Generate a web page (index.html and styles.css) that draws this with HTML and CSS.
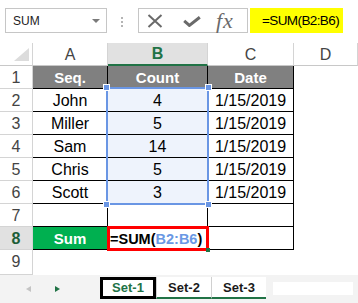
FILE: index.html
```html
<!DOCTYPE html>
<html lang="en">
<head>
  <meta charset="UTF-8">
  <meta name="viewport" content="width=device-width, initial-scale=1.0">
  <title>SUM in Excel</title>
  <link rel="stylesheet" href="styles.css">
</head>
<body>
  <div id="app">
    <div class="formulaBar">
      <div class="nameBox"><span>SUM</span><i class="caret"></i></div>
      <div class="grip"><i></i><i></i><i></i></div>
      <div class="fxBox">
        <svg class="icoCancel" width="16" height="14" viewBox="0 0 16 14"><path d="M1.5 1 L14.5 13 M14.5 1 L1.5 13" stroke="#6a6a6a" stroke-width="2" fill="none"/></svg>
        <svg class="icoEnter" width="18" height="11" viewBox="0 0 18 11"><path d="M1.2 4.8 L6.4 9.4 L16.8 1.2" stroke="#6a6a6a" stroke-width="3" fill="none"/></svg>
        <span class="fx">fx</span>
      </div>
      <div class="formulaInput">=SUM(B2:B6)</div>
    </div>

    <div class="sheet">
      <div class="corner"></div>
      <div class="colHead">A</div>
      <div class="colHead active">B</div>
      <div class="colHead">C</div>
      <div class="colHead">D</div>

      <div class="rowHead">1</div>
      <div class="cell head">Seq.</div>
      <div class="cell head">Count</div>
      <div class="cell head">Date</div>
      <div class="blank"></div>

      <div class="rowHead">2</div>
      <div class="cell">John</div>
      <div class="cell picked">4</div>
      <div class="cell">1/15/2019</div>
      <div class="blank"></div>

      <div class="rowHead">3</div>
      <div class="cell">Miller</div>
      <div class="cell picked">5</div>
      <div class="cell">1/15/2019</div>
      <div class="blank"></div>

      <div class="rowHead">4</div>
      <div class="cell">Sam</div>
      <div class="cell picked">14</div>
      <div class="cell">1/15/2019</div>
      <div class="blank"></div>

      <div class="rowHead">5</div>
      <div class="cell">Chris</div>
      <div class="cell picked">5</div>
      <div class="cell">1/15/2019</div>
      <div class="blank"></div>

      <div class="rowHead">6</div>
      <div class="cell">Scott</div>
      <div class="cell picked">3</div>
      <div class="cell">1/15/2019</div>
      <div class="blank"></div>

      <div class="rowHead">7</div>
      <div class="cell"></div>
      <div class="cell"></div>
      <div class="cell"></div>
      <div class="blank"></div>

      <div class="rowHead active">8</div>
      <div class="cell sum">Sum</div>
      <div class="cell editing">=SUM(<span class="ref">B2:B6</span>)</div>
      <div class="cell"></div>
      <div class="blank"></div>

      <div class="rowHead">9</div>
      <div class="blank"></div>
      <div class="blank"></div>
      <div class="blank"></div>
      <div class="blank"></div>

      <div class="selection">
        <i class="handle tl"></i><i class="handle tr"></i>
        <i class="handle bl"></i><i class="handle br"></i>
      </div>
    </div>

    <div class="tabBar">
      <div class="tabNav"><i class="arrowLeft"></i><i class="arrowRight"></i></div>
      <div class="tab current">Set-1</div>
      <div class="tab">Set-2</div>
      <div class="tab">Set-3</div>
      <div class="scrollBox"></div>
    </div>
  </div>
</body>
</html>
```

FILE: styles.css
```css
body {
  margin: 0;
  padding: 0;
  background-color: #ffffff;
  font-family: "Liberation Sans", Arial, sans-serif;
  color: #000000;
}
#app {
  width: 358px;
  height: 303px;
  overflow: hidden;
}

/* formula bar */
.formulaBar {
  display: flex;
  align-items: flex-start;
  height: 43px;
  padding: 8px 0 0 5px;
  box-sizing: border-box;
}
.nameBox {
  width: 102px;
  height: 25px;
  box-sizing: border-box;
  border: 1px solid #c6c6c6;
  display: flex;
  align-items: center;
  justify-content: space-between;
  padding: 0 6px 0 7px;
  font-size: 12px;
  color: #222222;
}
.caret {
  width: 0;
  height: 0;
  border-left: 4px solid transparent;
  border-right: 4px solid transparent;
  border-top: 4px solid #7a7a7a;
  margin-top: 1px;
}
.grip {
  display: flex;
  flex-direction: column;
  gap: 2px;
  margin: 9px 15px 0 14px;
}
.grip i {
  width: 2px;
  height: 2px;
  background-color: #b4b4b4;
}
.fxBox {
  width: 110px;
  height: 25px;
  box-sizing: border-box;
  border: 1px solid #c6c6c6;
  display: flex;
  align-items: center;
  padding-left: 8px;
}
.icoEnter {
  margin-left: 20px;
  margin-top: 2px;
}
.fx {
  margin-left: 15px;
  font-family: "Liberation Serif", "Times New Roman", serif;
  font-style: italic;
  font-size: 22px;
  letter-spacing: 1px;
  color: #6a6a6a;
  line-height: 22px;
}
.formulaInput {
  width: 93px;
  height: 25px;
  margin-left: 2px;
  background-color: #ffff00;
  font-size: 13.5px;
  letter-spacing: -0.6px;
  line-height: 26px;
  padding-left: 12px;
  box-sizing: border-box;
  white-space: nowrap;
}

/* grid */
.sheet {
  position: relative;
  display: grid;
  grid-template-columns: 33px 75px 100px 86px 64px;
  grid-template-rows: repeat(9, 23px) 25px;
}
.corner {
  position: relative;
  border-right: 1px solid #d4d4d4;
  border-bottom: 1px solid #c8c8c8;
}
.corner::after {
  content: "";
  position: absolute;
  right: 3px;
  bottom: 4px;
  width: 15px;
  height: 13px;
  background-color: #dcdcdc;
  clip-path: polygon(100% 0, 100% 100%, 0 100%);
}
.colHead {
  border-right: 1px solid #d4d4d4;
  border-bottom: 1px solid #c8c8c8;
  text-align: center;
  font-size: 16px;
  line-height: 23px;
  color: #444444;
}
.colHead.active {
  background-color: #e1e1e1;
  border-bottom: 2px solid #217346;
  color: #217346;
  font-weight: bold;
  line-height: 22px;
}
.rowHead {
  border-right: 1px solid #d4d4d4;
  border-bottom: 1px solid #d4d4d4;
  text-align: center;
  font-size: 16px;
  line-height: 23px;
  color: #444444;
}
.rowHead.active {
  background-color: #e1e1e1;
  color: #1d5e38;
  font-weight: bold;
}
.cell {
  border-right: 1px solid #000000;
  border-bottom: 1px solid #000000;
  text-align: center;
  font-size: 16px;
  line-height: 23px;
  white-space: nowrap;
}
.cell.head {
  background-color: #808080;
  color: #ffffff;
  font-weight: bold;
  font-size: 15px;
  line-height: 24px;
}
.cell.picked {
  background-color: #eef3fc;
}
.cell.sum {
  background-color: #00b050;
  color: #ffffff;
  font-weight: bold;
  font-size: 15px;
  line-height: 24px;
}
.cell.editing {
  position: relative;
  z-index: 1;
  text-align: left;
  padding-left: 2px;
  font-weight: bold;
  font-size: 14.5px;
  line-height: 24px;
  outline: 3px solid #ff0000;
  outline-offset: -2px;
}
.cell.editing::after {
  content: "";
  position: absolute;
  right: -3px;
  bottom: -3px;
  width: 4px;
  height: 4px;
  background-color: #217346;
}
.ref {
  color: #6a98e4;
}

/* range being referenced */
.selection {
  position: absolute;
  left: 106px;
  top: 44px;
  width: 103px;
  height: 118px;
  box-sizing: border-box;
  border: 2px solid #6a96e4;
  pointer-events: none;
}
.handle {
  position: absolute;
  width: 5px;
  height: 5px;
  background-color: #6a96e4;
  border: 1px solid #ffffff;
}
.handle.tl { left: -5px; top: -5px; }
.handle.tr { right: -5px; top: -5px; }
.handle.bl { left: -5px; bottom: -5px; }
.handle.br { right: -5px; bottom: -5px; }

/* sheet tabs */
.tabBar {
  display: flex;
  align-items: flex-start;
  height: 28px;
  background-color: #f3f3f3;
}
.tabNav {
  width: 100px;
  height: 28px;
  display: flex;
  align-items: center;
  padding-left: 26px;
  box-sizing: border-box;
}
.arrowLeft {
  width: 0;
  height: 0;
  border-top: 3px solid transparent;
  border-bottom: 3px solid transparent;
  border-right: 5px solid #c4c4c4;
}
.arrowRight {
  width: 0;
  height: 0;
  margin-left: 24px;
  border-top: 3px solid transparent;
  border-bottom: 3px solid transparent;
  border-left: 5px solid #217346;
}
.tab {
  width: 55px;
  height: 22px;
  margin-top: 2px;
  box-sizing: border-box;
  background-color: #ffffff;
  border-bottom: 2px solid #217346;
  font-size: 13px;
  font-weight: bold;
  line-height: 21px;
  text-align: center;
  color: #1a1a1a;
}
.tab + .tab {
  border-left: 1px solid #d0d0d0;
}
.tab.current {
  width: 56px;
  border: 3px solid #000000;
  color: #217346;
  line-height: 16px;
}
.scrollBox {
  width: 80px;
  height: 13px;
  margin: 7px 0 0 7px;
  background-color: #ffffff;
}
```
